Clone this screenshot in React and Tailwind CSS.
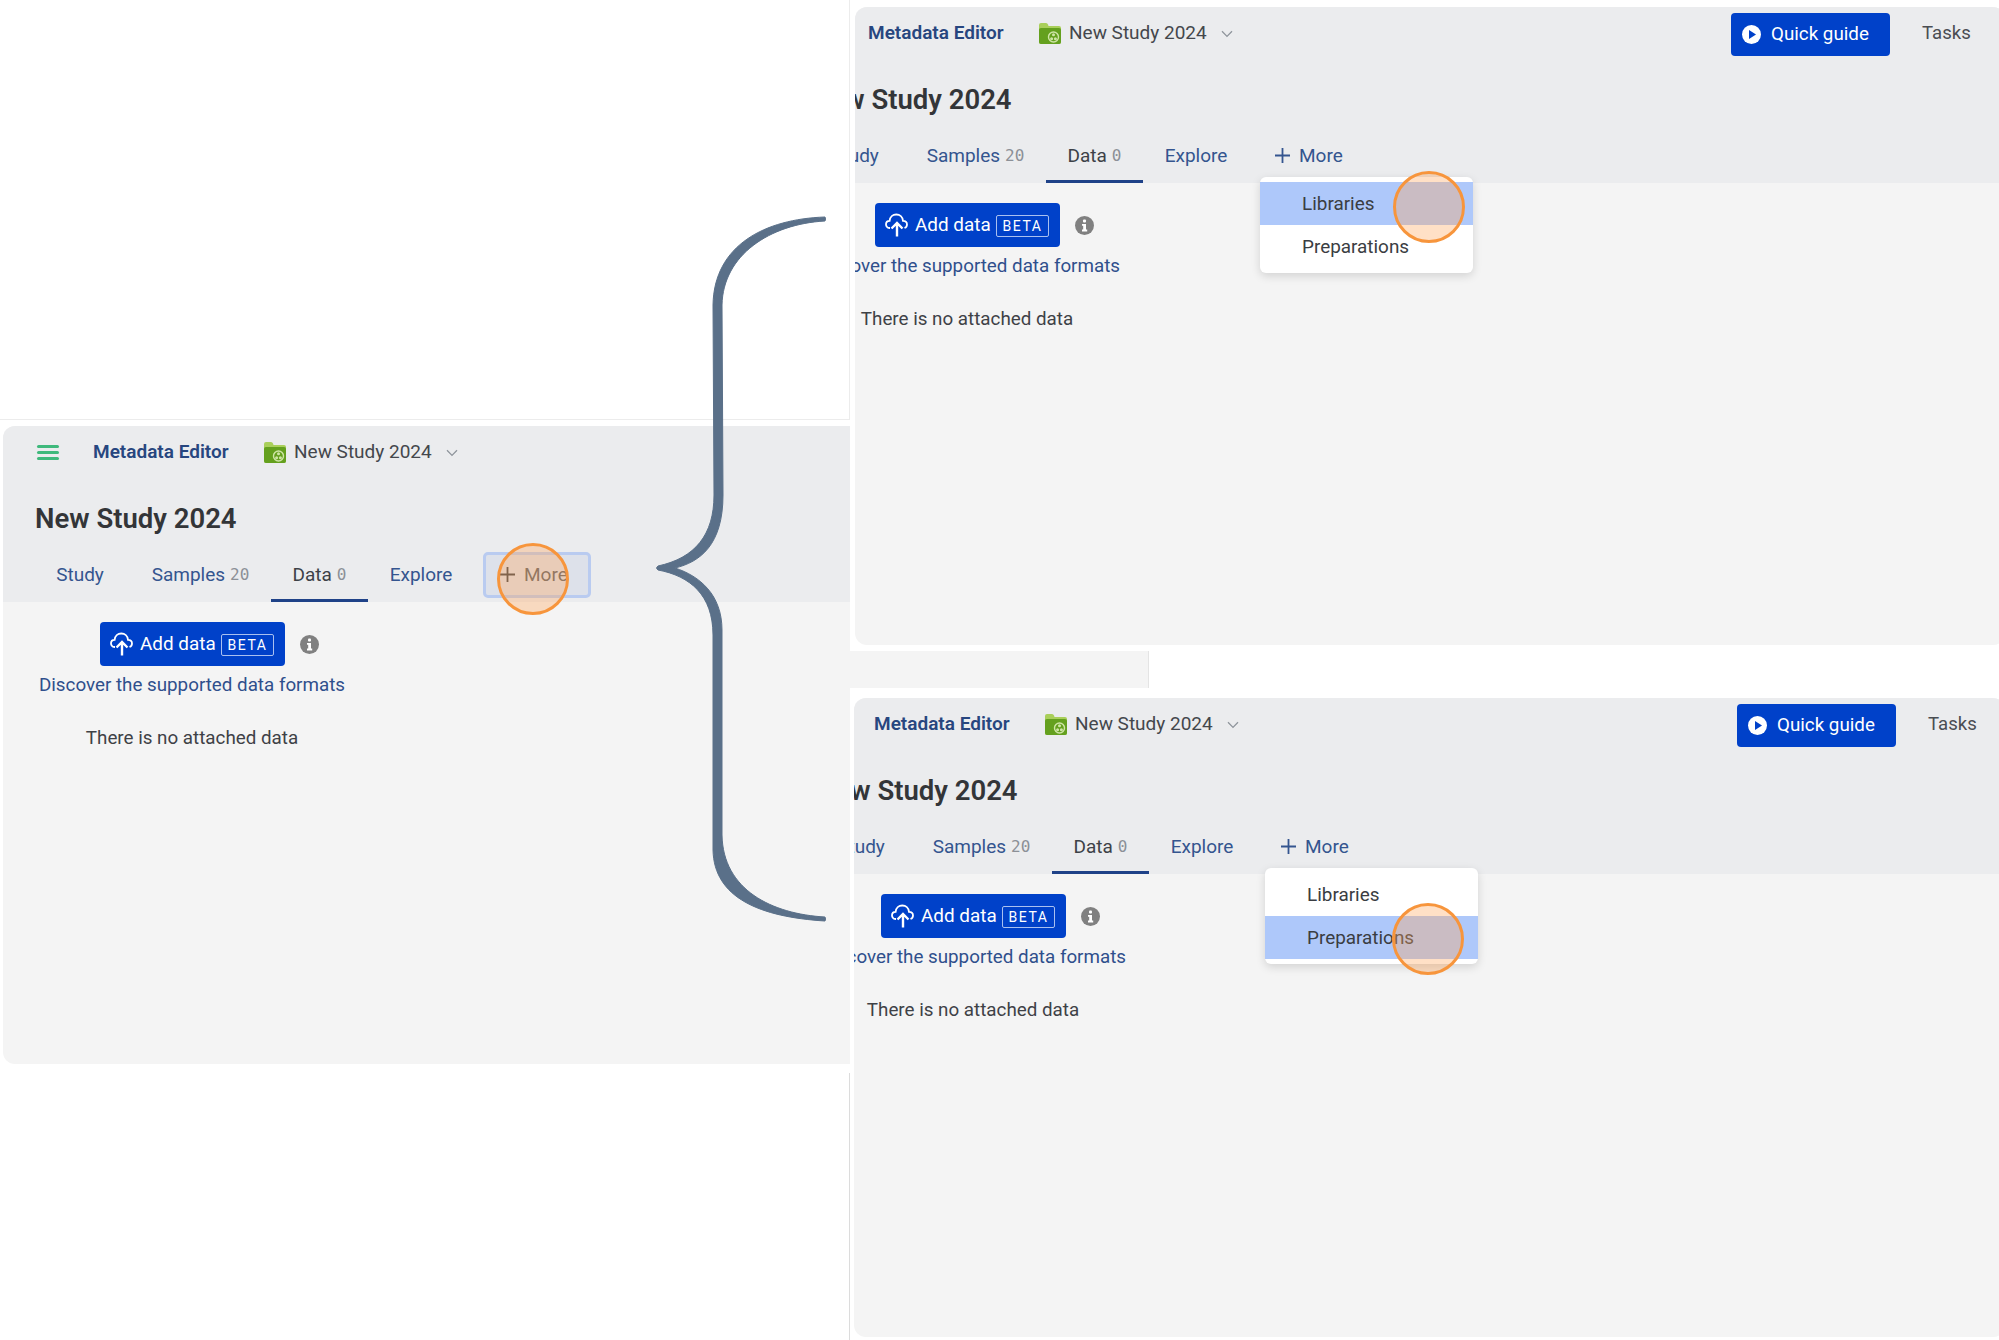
const font = { fontFamily: "Roboto, 'Noto Sans', sans-serif" };

function Hamburger() {
  return (
    <div className="w-[22px] flex flex-col gap-[3px] shrink-0">
      <div className="h-[3px] bg-[#3fb97c] rounded-sm" />
      <div className="h-[3px] bg-[#3fb97c] rounded-sm" />
      <div className="h-[3px] bg-[#3fb97c] rounded-sm" />
    </div>
  );
}

function FolderIcon() {
  return (
    <svg width="22" height="21" viewBox="0 0 22 21" className="shrink-0">
      <path d="M0 2 Q0 0 2 0 H7 Q8.5 0 9 1.5 L9.5 3 H20 Q22 3 22 5 V19 Q22 21 20 21 H2 Q0 21 0 19 Z" fill="#a9cf5a" />
      <path d="M0 6.5 Q0 5 2 5 H20 Q22 5 22 6.5 V19 Q22 21 20 21 H2 Q0 21 0 19 Z" fill="#64a01e" />
      <circle cx="14.5" cy="14" r="5" fill="none" stroke="#cfe5a6" strokeWidth="1.4" />
      <circle cx="14.5" cy="11.8" r="1.5" fill="#cfe5a6" />
      <circle cx="12.6" cy="15.8" r="1.5" fill="#cfe5a6" />
      <circle cx="16.4" cy="15.8" r="1.5" fill="#cfe5a6" />
    </svg>
  );
}

function Chevron() {
  return (
    <svg width="12" height="8" viewBox="0 0 12 8" fill="none" className="shrink-0">
      <path d="M1 1.2 L6 6.4 L11 1.2" stroke="#8f959c" strokeWidth="1.3" />
    </svg>
  );
}

function CloudUp() {
  return (
    <svg width="23" height="24" viewBox="0 0 23 24" fill="none" className="shrink-0">
      <path d="M5 15 H4.5 C2 15 1 13 1 11.2 C1 9.2 2.6 7.8 4.6 7.8 C5 4 7.8 1.5 11.3 1.5 C14.8 1.5 17.6 4 18 7.8 C20.2 7.8 22 9.2 22 11.4 C22 13 21 14.4 19.5 15" stroke="white" strokeWidth="1.8" />
      <path d="M12 23.5 V11 M6.5 15.5 L12 10 L17.5 15.5" stroke="white" strokeWidth="2.4" />
    </svg>
  );
}

function InfoIcon() {
  return (
    <svg width="19" height="19" viewBox="0 0 19 19" className="shrink-0">
      <circle cx="9.5" cy="9.5" r="9.5" fill="#808080" />
      <rect x="8" y="3.6" width="3" height="3" rx="1" fill="white" />
      <path d="M7 8 H11 V13.6 H12.2 V15.4 H7 V13.6 H8.2 V9.8 H7 Z" fill="white" />
    </svg>
  );
}

function PlayIcon() {
  return (
    <svg width="19" height="19" viewBox="0 0 19 19" className="shrink-0">
      <circle cx="9.5" cy="9.5" r="9.5" fill="white" />
      <path d="M7 5 L14 9.5 L7 14 Z" fill="#0041c9" />
    </svg>
  );
}

function PlusIcon({ color }) {
  return (
    <svg width="15" height="15" viewBox="0 0 15 15" className="shrink-0">
      <path d="M7.5 0 V15 M0 7.5 H15" stroke={color} strokeWidth="1.8" />
    </svg>
  );
}

function Tab({ w, label, count, active }) {
  return (
    <div className={`${w} h-full flex items-center justify-center gap-[5px] pb-[2px] border-b-[3px] ${active ? "border-[#1f4288] text-[#3d4147]" : "border-transparent text-[#34558f]"}`}>
      <span className="text-[19px] leading-none">{label}</span>
      {count !== undefined && (
        <span className="text-[16px] leading-none text-[#8c9097]" style={{ fontFamily: "'DejaVu Sans Mono', monospace" }}>{count}</span>
      )}
    </div>
  );
}

function Menu({ active, className }) {
  const items = ["Libraries", "Preparations"];
  return (
    <div className={`absolute w-[213px] h-[96px] bg-white rounded-[6px] shadow-[0_3px_10px_rgba(0,0,0,0.14)] py-[5px] ${className}`}>
      {items.map((t, i) => (
        <div key={t} className={`h-[43px] flex items-center pl-[42px] pt-[1px] text-[18.9px] text-[#3a3d42] ${active === i ? "bg-[#aec8fa]" : ""}`}>{t}</div>
      ))}
    </div>
  );
}

function Circle({ className }) {
  return <div className={`absolute w-[72px] h-[72px] rounded-full border-[3px] border-[#f7953c] bg-[#ffa65c]/35 ${className}`} />;
}

function Panel({ outer, inner, quick, moreBox, menu, circle }) {
  return (
    <div className={`bg-[#f4f4f4] overflow-hidden ${outer}`} style={font}>
      <div className={`relative w-[1221px] h-full ${inner}`}>
        <div className="bg-[#ebecee] h-[176px] flex flex-col">
          <div className="h-[53px] flex items-center pl-[34px] pr-[30px]">
            <Hamburger />
            <span className="ml-[34px] w-[137px] whitespace-nowrap text-[19px] font-semibold text-[#27467f]">Metadata Editor</span>
            <div className="ml-[34px]"><FolderIcon /></div>
            <span className="ml-[8px] w-[139px] whitespace-nowrap text-[19px] text-[#44474c]">New Study 2024</span>
            <div className="ml-[13px]"><Chevron /></div>
            {quick && (
              <div className="ml-auto flex items-center">
                <div className="w-[159px] h-[43px] bg-[#0041c9] rounded-[4px] flex items-center pl-[11px] gap-[10px] text-white text-[18.8px] mt-[1px]">
                  <PlayIcon />
                  <span>Quick guide</span>
                </div>
                <span className="ml-[32px] w-[47px] text-[18.6px] text-[#4a4d52]">Tasks</span>
              </div>
            )}
          </div>
          <div className="h-[73px] flex items-center pl-[32px] pt-[7px]">
            <h1 className="text-[27.5px] font-semibold text-[#333538] leading-none whitespace-nowrap">New Study 2024</h1>
          </div>
          <div className="h-[50px] flex items-stretch pl-[32px]">
            <Tab w="w-[90px]" label="Study" />
            <div className="w-[6px]" />
            <Tab w="w-[139px]" label="Samples" count="20" />
            <div className="w-[1px]" />
            <Tab w="w-[97px]" label="Data" count="0" active />
            <Tab w="w-[106px]" label="Explore" />
            <div className={`ml-[9px] w-[108px] h-[46px] flex items-center pl-[14px] gap-[9px] pb-[1px] rounded-[5px] border-[3px] ${moreBox ? "border-[#b9cbf0] bg-[#dde1ea] text-[#5a5e64]" : "border-transparent text-[#34558f]"}`}>
              <PlusIcon color={moreBox ? "#3c3f44" : "#34558f"} />
              <span className="text-[19px] leading-none">More</span>
            </div>
          </div>
        </div>
        <div className="w-[378px] flex flex-col items-center">
          <div className="w-full pl-[97px] pt-[20px] flex items-center">
            <div className="w-[185px] h-[44px] bg-[#0041c9] rounded-[4px] flex items-center pl-[10px] text-white">
              <CloudUp />
              <span className="ml-[7px] w-[75px] whitespace-nowrap text-[18.9px]">Add data</span>
              <span className="ml-[6px] w-[53px] h-[22px] mt-[1px] border border-[#a9c0f0] rounded-[2px] flex items-center justify-center text-[14px] tracking-[1.5px] leading-none">BETA</span>
            </div>
            <div className="ml-[15px]"><InfoIcon /></div>
          </div>
          <p className="mt-[8px] text-[18.8px] leading-[22px] text-[#2f4f8c] whitespace-nowrap">Discover the supported data formats</p>
          <p className="mt-[31px] text-[18.8px] leading-[22px] text-[#3e4146] whitespace-nowrap">There is no attached data</p>
        </div>
        {menu}
        {circle}
      </div>
    </div>
  );
}

function Brace() {
  return (
    <svg width="185" height="720" viewBox="0 0 185 720" className="absolute left-[650px] top-[210px]">
      <path
        d="M175 7 C115 9 64 35 63 95 L64 285 C64 325 45 348 8 356 Q5 358 8 360 C40 366 63 385 63 425 L63 640 C64 688 110 707 175 711 Q176 709 175 707 C122 704 73 680 72 625 L72 420 C72 385 50 366 25 358 C50 352 73 335 73 285 L72 95 C73 45 120 14 175 11 Q176 9 175 7 Z"
        fill="#5a7089"
        stroke="#5a7089"
        strokeWidth="1"
        strokeLinejoin="round"
      />
    </svg>
  );
}

export default function App() {
  return (
    <div className="relative w-[1999px] h-[1340px] bg-white overflow-hidden flex">
      <div className="w-[850px] shrink-0 flex flex-col">
        <div className="h-[420px] border-r border-b border-[#ececec]" />
        <div className="h-[6px]" />
        <Panel
          outer="h-[638px] ml-[3px] rounded-l-[12px]"
          inner=""
          moreBox
          circle={<Circle className="left-[494px] top-[117px]" />}
        />
        <div className="h-[9px]" />
        <div className="flex-1 border-r border-[#dcdcdc]" />
      </div>
      <div className="flex-1 flex flex-col">
        <div className="h-[7px]" />
        <Panel
          outer="h-[638px] ml-[5px] rounded-[12px]"
          inner="-ml-[77px]"
          quick
          menu={<Menu active={0} className="left-[482px] top-[170px]" />}
          circle={<Circle className="left-[615px] top-[164px]" />}
        />
        <div className="h-[6px]" />
        <div className="w-[299px] h-[37px] bg-[#f4f4f4] border-r border-[#e4e4e4]" />
        <div className="h-[10px]" />
        <Panel
          outer="h-[639px] ml-[4px] rounded-[12px]"
          inner="-ml-[70px]"
          quick
          menu={<Menu active={1} className="left-[481px] top-[170px]" />}
          circle={<Circle className="left-[608px] top-[205px]" />}
        />
      </div>
      <Brace />
    </div>
  );
}
